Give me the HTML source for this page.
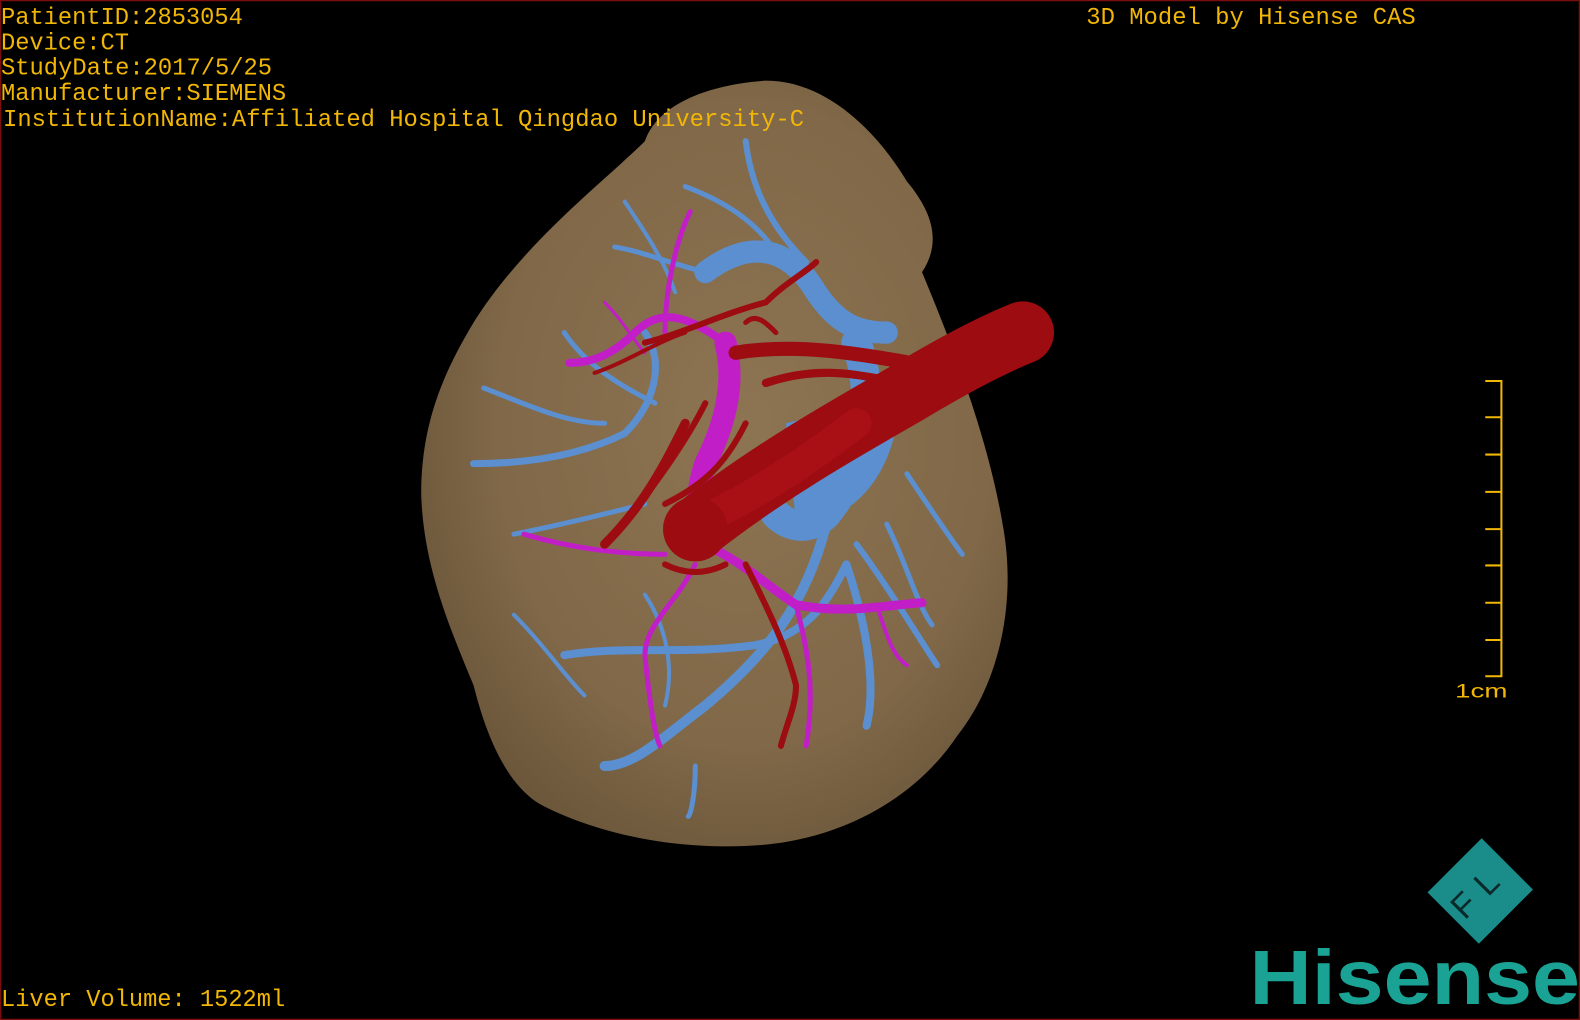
<!DOCTYPE html>
<html><head><meta charset="utf-8"><style>
html,body{margin:0;padding:0;background:#000;}
svg{display:block}
</style></head><body>
<svg width="1580" height="1020" viewBox="0 0 1568 1012" preserveAspectRatio="none" xmlns="http://www.w3.org/2000/svg">
<rect x="0" y="0" width="1568" height="1012" fill="#000"/>
<rect x="0.5" y="0.5" width="1567" height="1011" fill="none" stroke="#7a0d0d" stroke-width="1.5"/>
<defs>
<radialGradient id="lg" cx="0.55" cy="0.45" r="0.6">
<stop offset="0" stop-color="#8d7452"/><stop offset="0.7" stop-color="#806848"/><stop offset="1" stop-color="#6c573b"/>
</radialGradient>
</defs>
<path d="M640,140 C650,110 690,85 760,80 C820,80 870,130 900,180 C925,210 935,240 915,270 C940,330 980,430 995,520 C1010,600 990,680 950,730 C910,790 840,830 760,838 C680,845 600,830 540,800 C500,780 480,720 470,680 C445,620 420,560 418,490 C418,420 440,370 470,320 C520,240 600,180 640,140 Z" fill="url(#lg)"/>
<g fill="none" stroke="#5b8fcf" stroke-linecap="round">
<path d="M700,270 C740,240 780,240 810,290 C830,320 850,330 880,330" stroke-width="22"/>
<path d="M850,340 C870,400 860,460 820,510 C800,530 780,520 770,510" stroke-width="30"/>
<path d="M820,520 C800,600 760,650 700,700 C660,730 630,760 600,760" stroke-width="10"/>
<path d="M560,650 C620,640 680,650 750,640 C800,630 820,600 840,560" stroke-width="8"/>
<path d="M840,560 C860,620 870,680 860,720" stroke-width="8"/>
<path d="M850,540 C880,580 910,630 930,660" stroke-width="6"/>
<path d="M470,460 C530,460 580,450 620,430 C650,400 660,360 640,330" stroke-width="7"/>
<path d="M480,385 C520,400 560,420 600,420" stroke-width="5"/>
<path d="M560,330 C580,360 610,380 650,400" stroke-width="5"/>
<path d="M610,245 C640,250 660,260 700,270" stroke-width="5"/>
<path d="M740,140 C745,180 760,220 800,260" stroke-width="6"/>
<path d="M680,185 C720,200 750,220 770,250" stroke-width="5"/>
<path d="M620,200 C640,230 660,260 670,290" stroke-width="4"/>
<path d="M510,530 C560,520 600,510 640,500" stroke-width="5"/>
<path d="M510,610 C540,640 560,670 580,690" stroke-width="4"/>
<path d="M640,590 C660,620 670,660 660,700" stroke-width="4"/>
<path d="M690,760 C690,790 685,810 683,810" stroke-width="5"/>
<path d="M900,470 C920,500 940,530 955,550" stroke-width="5"/>
<path d="M880,520 C900,560 910,600 925,620" stroke-width="5"/>
</g>
<path d="M780,420 C820,410 870,400 890,420 C880,480 840,520 790,520 Z" fill="#5b8fcf"/>
<g fill="none" stroke="#c21ec7" stroke-linecap="round">
<path d="M720,340 C730,380 720,420 700,460 C690,490 690,520 700,540" stroke-width="22"/>
<path d="M700,540 C740,560 760,580 790,600 C840,610 880,600 915,598" stroke-width="9"/>
<path d="M720,340 C690,320 660,300 630,330 C610,350 590,360 565,360" stroke-width="8"/>
<path d="M660,330 C660,290 670,240 685,210" stroke-width="5"/>
<path d="M690,560 C670,600 640,620 640,650 C645,700 650,730 655,740" stroke-width="5"/>
<path d="M660,550 C620,550 570,545 520,530" stroke-width="5"/>
<path d="M790,600 C800,640 810,680 800,740" stroke-width="5"/>
<path d="M870,600 C880,630 885,650 900,660" stroke-width="4"/>
<path d="M600,300 C620,320 630,340 640,350" stroke-width="3"/>
</g>
<g fill="none" stroke="#9c0c10" stroke-linecap="round">
<path d="M690,525 C760,470 830,430 900,390 C950,360 990,340 1015,330" stroke-width="62"/>
<path d="M700,515 C770,480 810,450 850,420" stroke-width="30" stroke="#a81016"/>
<path d="M730,350 C790,340 850,350 930,365" stroke-width="14"/>
<path d="M760,380 C820,360 860,375 900,380" stroke-width="8"/>
<path d="M680,420 C660,460 640,500 600,540" stroke-width="9"/>
<path d="M700,400 C680,440 650,480 620,520" stroke-width="6"/>
<path d="M740,420 C720,460 700,480 660,500" stroke-width="6"/>
<path d="M640,340 C680,330 720,310 760,300 C780,280 800,270 810,260" stroke-width="6"/>
<path d="M590,370 C620,360 650,340 680,330" stroke-width="4"/>
<path d="M740,560 C760,600 780,640 790,680 C790,700 780,720 775,740" stroke-width="6"/>
<path d="M720,560 C700,570 680,570 660,560" stroke-width="6"/>
<path d="M770,330 C760,320 750,310 740,320" stroke-width="5"/>
</g>
<circle cx="690" cy="525" r="32" fill="#9c0c10"/>
<g font-family="'Liberation Mono',monospace" font-size="23.5" fill="#f2b705">
<text x="1" y="24" textLength="240" lengthAdjust="spacingAndGlyphs">PatientID:2853054</text>
<text x="1" y="49" textLength="127" lengthAdjust="spacingAndGlyphs">Device:CT</text>
<text x="1" y="74" textLength="269" lengthAdjust="spacingAndGlyphs">StudyDate:2017/5/25</text>
<text x="1" y="99" textLength="283" lengthAdjust="spacingAndGlyphs">Manufacturer:SIEMENS</text>
<text x="3" y="125" textLength="795" lengthAdjust="spacingAndGlyphs">InstitutionName:Affiliated Hospital Qingdao University-C</text>
<text x="1078" y="24" textLength="327" lengthAdjust="spacingAndGlyphs">3D Model by Hisense CAS</text>
<text x="1" y="998" textLength="282" lengthAdjust="spacingAndGlyphs">Liver Volume: 1522ml</text>
</g>
<g stroke="#f2b705" stroke-width="2" fill="none">
<path d="M1474,378 H1490 V671 H1474"/>
<path d="M1474,414 H1490 M1474,451 H1490 M1474,488 H1490 M1474,525 H1490 M1474,561 H1490 M1474,598 H1490 M1474,635 H1490"/>
</g>
<text x="1444" y="692" font-family="'Liberation Sans',sans-serif" font-size="19" fill="#f2b705" textLength="52" lengthAdjust="spacingAndGlyphs">1cm</text>
<g transform="translate(1469,884) rotate(-45)">
<rect x="-38" y="-36" width="76" height="72" fill="#1a8c8a"/>
<text x="0" y="10" text-anchor="middle" font-family="'Liberation Sans',sans-serif" font-size="34" fill="#0a2a2a" letter-spacing="12">FL</text>
</g>
<text x="1240" y="996" font-family="'Liberation Sans',sans-serif" font-weight="bold" font-size="76" fill="#1aa394" textLength="328" lengthAdjust="spacingAndGlyphs">Hisense</text>
</svg>
</body></html>
